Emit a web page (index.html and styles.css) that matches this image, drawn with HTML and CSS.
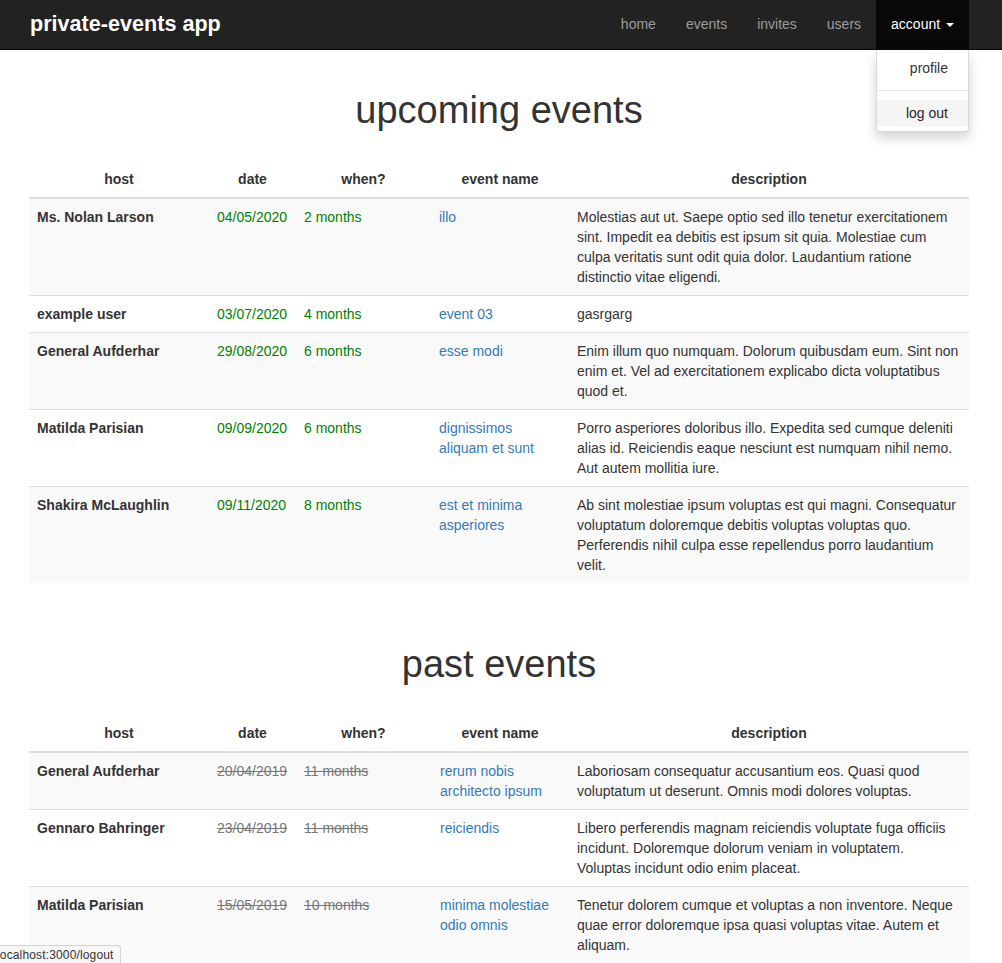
FILE: index.html
```html
<!DOCTYPE html>
<html lang="en">
<head>
<meta charset="utf-8">
<title>private-events app</title>
<link rel="stylesheet" href="styles.css">
</head>
<body>
<nav class="navbar">
  <div class="navbar-inner">
    <a class="brand" href="#">private-events app</a>
    <ul class="nav">
      <li><a href="#">home</a></li>
      <li><a href="#">events</a></li>
      <li><a href="#">invites</a></li>
      <li><a href="#">users</a></li>
      <li class="dropdown open">
        <a href="#" class="dropdown-toggle">account <span class="caret"></span></a>
        <ul class="dropdown-menu">
          <li><a href="#">profile</a></li>
          <li class="divider"></li>
          <li class="hover"><a href="#">log out</a></li>
        </ul>
      </li>
    </ul>
  </div>
</nav>

<main class="container">
  <section class="block">
    <h1 class="title">upcoming events</h1>
    <table class="events">
      <colgroup>
        <col class="c-host"><col class="c-date"><col class="c-when"><col class="c-name"><col class="c-desc">
      </colgroup>
      <thead>
        <tr><th>host</th><th>date</th><th>when?</th><th>event name</th><th>description</th></tr>
      </thead>
      <tbody>
        <tr>
          <td class="host">Ms. Nolan Larson</td>
          <td class="when-date">04/05/2020</td>
          <td class="when-date">2 months</td>
          <td><a href="#">illo</a></td>
          <td>Molestias aut ut. Saepe optio sed illo tenetur exercitationem sint. Impedit ea debitis est ipsum sit quia. Molestiae cum culpa veritatis sunt odit quia dolor. Laudantium ratione distinctio vitae eligendi.</td>
        </tr>
        <tr>
          <td class="host">example user</td>
          <td class="when-date">03/07/2020</td>
          <td class="when-date">4 months</td>
          <td><a href="#">event 03</a></td>
          <td>gasrgarg</td>
        </tr>
        <tr>
          <td class="host">General Aufderhar</td>
          <td class="when-date">29/08/2020</td>
          <td class="when-date">6 months</td>
          <td><a href="#">esse modi</a></td>
          <td>Enim illum quo numquam. Dolorum quibusdam eum. Sint non enim et. Vel ad exercitationem explicabo dicta voluptatibus quod et.</td>
        </tr>
        <tr>
          <td class="host">Matilda Parisian</td>
          <td class="when-date">09/09/2020</td>
          <td class="when-date">6 months</td>
          <td><a href="#">dignissimos aliquam et sunt</a></td>
          <td>Porro asperiores doloribus illo. Expedita sed cumque deleniti alias id. Reiciendis eaque nesciunt est numquam nihil nemo. Aut autem mollitia iure.</td>
        </tr>
        <tr>
          <td class="host">Shakira McLaughlin</td>
          <td class="when-date">09/11/2020</td>
          <td class="when-date">8 months</td>
          <td><a href="#">est et minima asperiores</a></td>
          <td>Ab sint molestiae ipsum voluptas est qui magni. Consequatur voluptatum doloremque debitis voluptas voluptas quo. Perferendis nihil culpa esse repellendus porro laudantium velit.</td>
        </tr>
      </tbody>
    </table>
  </section>

  <section class="block">
    <h1 class="title">past events</h1>
    <table class="events">
      <colgroup>
        <col class="c-host"><col class="c-date"><col class="c-when"><col class="c-name"><col class="c-desc">
      </colgroup>
      <thead>
        <tr><th>host</th><th>date</th><th>when?</th><th>event name</th><th>description</th></tr>
      </thead>
      <tbody>
        <tr>
          <td class="host">General Aufderhar</td>
          <td class="past-date">20/04/2019</td>
          <td class="past-date">11 months</td>
          <td class="past-name"><a href="#">rerum nobis architecto ipsum</a></td>
          <td>Laboriosam consequatur accusantium eos. Quasi quod voluptatum ut deserunt. Omnis modi dolores voluptas.</td>
        </tr>
        <tr>
          <td class="host">Gennaro Bahringer</td>
          <td class="past-date">23/04/2019</td>
          <td class="past-date">11 months</td>
          <td class="past-name"><a href="#">reiciendis</a></td>
          <td>Libero perferendis magnam reiciendis voluptate fuga officiis incidunt. Doloremque dolorum veniam in voluptatem. Voluptas incidunt odio enim placeat.</td>
        </tr>
        <tr>
          <td class="host">Matilda Parisian</td>
          <td class="past-date">15/05/2019</td>
          <td class="past-date">10 months</td>
          <td class="past-name"><a href="#">minima molestiae odio omnis</a></td>
          <td>Tenetur dolorem cumque et voluptas a non inventore. Neque quae error doloremque ipsa quasi voluptas vitae. Autem et aliquam.</td>
        </tr>
      </tbody>
    </table>
  </section>
</main>

<div class="status-bubble">localhost:3000/logout</div>
</body>
</html>
```

FILE: styles.css
```css
* { box-sizing: border-box; }

html, body {
  margin: 0;
  padding: 0;
}

body {
  font-family: "Liberation Sans", Arial, Helvetica, sans-serif;
  font-size: 14px;
  line-height: 20px;
  color: #333;
  background: #fff;
}

a { text-decoration: none; }

/* ---------- navbar ---------- */
.navbar {
  background: #222;
  border-bottom: 1px solid #080808;
  height: 50px;
}

.navbar-inner {
  width: 940px;
  margin-left: 29px;
  display: flex;
  justify-content: space-between;
  align-items: flex-start;
}

.brand {
  display: block;
  padding: 14px 0 15px 1px;
  font-size: 21.6px;
  font-weight: bold;
  line-height: 20px;
  color: #fff;
}

.nav {
  list-style: none;
  margin: 0;
  padding: 0;
  display: flex;
}

.nav > li {
  position: relative;
}

.nav > li > a {
  display: block;
  padding: 14px 15px 15px;
  line-height: 20px;
  color: #9d9d9d;
}

.nav > li.open > a {
  background: #080808;
  color: #fff;
}

.caret {
  display: inline-block;
  width: 0;
  height: 0;
  margin-left: 2px;
  vertical-align: middle;
  border-top: 4px solid #fff;
  border-left: 4px solid transparent;
  border-right: 4px solid transparent;
}

.dropdown-menu {
  position: absolute;
  top: 50px;
  left: 0;
  right: 0;
  z-index: 10;
  list-style: none;
  margin: 0;
  padding: 5px 0;
  background: #fff;
  border: 1px solid rgba(0, 0, 0, 0.15);
  border-top: 0;
  border-radius: 0 0 4px 4px;
  box-shadow: 0 6px 12px rgba(0, 0, 0, 0.175);
}

.dropdown-menu > li > a {
  display: block;
  padding: 3px 20px;
  line-height: 20px;
  color: #333;
  text-align: right;
  white-space: nowrap;
}

.dropdown-menu > li.hover > a {
  background: #f5f5f5;
  color: #262626;
}

.dropdown-menu .divider {
  height: 1px;
  margin: 9px 0;
  background: #e5e5e5;
}

/* ---------- content ---------- */
.container {
  width: 940px;
  margin-left: 29px;
}

.block {
  display: flow-root;
}

.title {
  margin: 39px 0 30px;
  font-size: 38px;
  font-weight: normal;
  line-height: 42px;
  text-align: center;
  color: #333;
}

.events {
  width: 940px;
  table-layout: fixed;
  border-collapse: collapse;
  border-spacing: 0;
  margin-bottom: 21px;
}

.c-host { width: 180px; }
.c-date { width: 87px; }
.c-when { width: 135px; }
.c-name { width: 138px; }
.c-desc { width: 400px; }

.events th {
  padding: 8px;
  font-weight: bold;
  text-align: center;
  vertical-align: bottom;
  border-bottom: 2px solid #ddd;
}

.events td {
  padding: 8px;
  vertical-align: top;
  text-align: left;
  border-top: 1px solid #ddd;
}

.events tbody tr:first-child td {
  border-top: 0;
}

.events tbody tr:nth-child(odd) {
  background: #f9f9f9;
}

.events .host {
  font-weight: bold;
}

.events .when-date {
  color: green;
}

.events .past-date {
  color: #777;
  text-decoration: line-through;
}

.events td a {
  color: #337ab7;
}

.events .past-name {
  padding-left: 9px;
}

/* ---------- browser status bubble ---------- */
.status-bubble {
  position: fixed;
  left: -6px;
  bottom: 0;
  height: 18px;
  padding: 1px 6px 0 2px;
  font-size: 12px;
  line-height: 16px;
  letter-spacing: 0.15px;
  color: #333;
  background: #f7f7f7;
  border: 1px solid #d3d3d3;
  border-bottom: 0;
  border-top-right-radius: 4px;
}
```
